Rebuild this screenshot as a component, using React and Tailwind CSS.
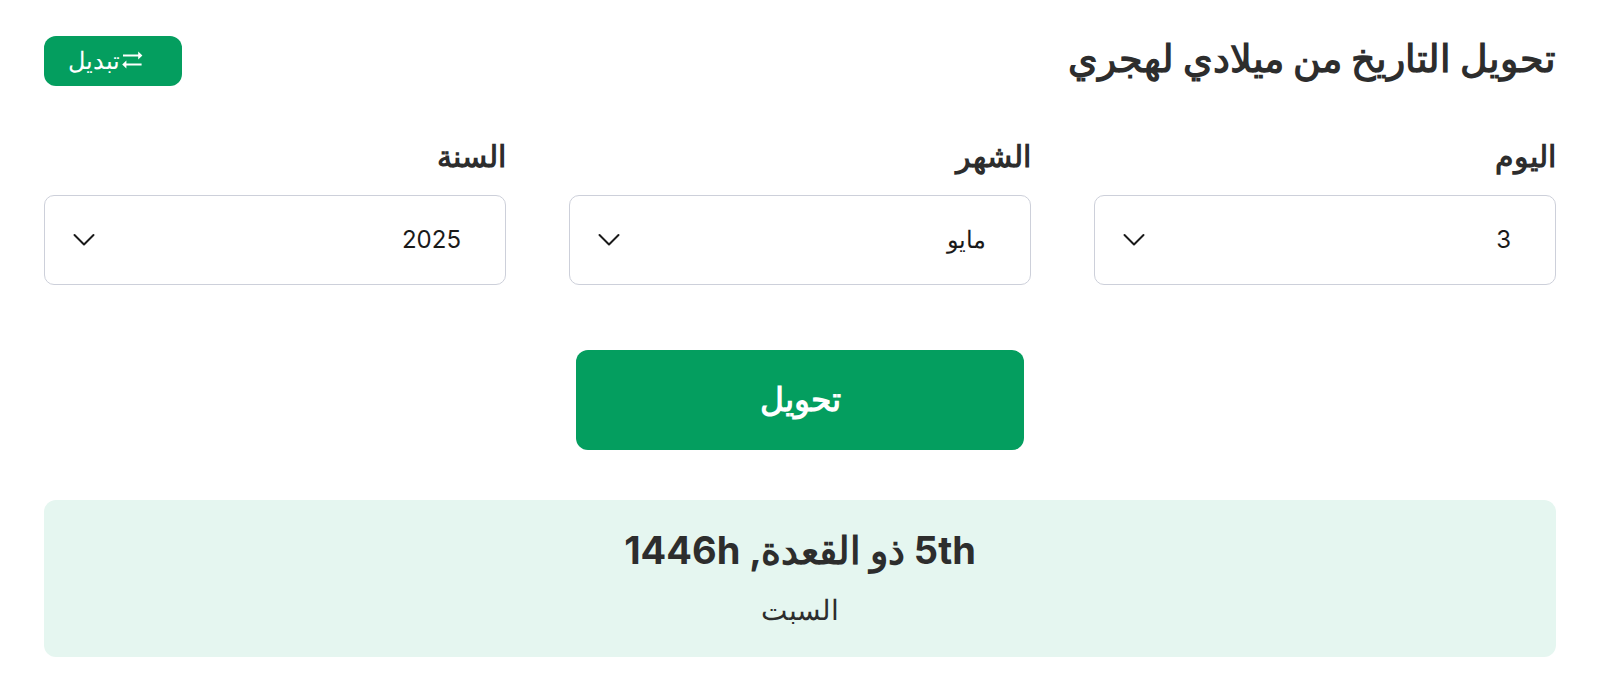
import React from "react";

const FIELDS = [
  { id: "day", label: "اليوم", value: "3" },
  { id: "month", label: "الشهر", value: "مايو" },
  { id: "year", label: "السنة", value: "2025" },
];

function SwapIcon() {
  return (
    <svg width="24" height="24" viewBox="0 0 24 24" fill="currentColor" aria-hidden="true">
      <path d="M3 5.6h15.2V2.6L22.4 6.6l-4.2 4V7.6H3z" />
      <path d="M21.6 14.4H6.4v-3L2.2 15.4l4.2 4v-3h15.2z" />
    </svg>
  );
}

function SelectField({ id, label, value }) {
  return (
    <div>
      <label htmlFor={id} className="block text-[30px] leading-[38px] font-bold">{label}</label>
      <div className="grid items-center mt-5">
        <select id={id} defaultValue={value} className="col-start-1 row-start-1 w-full h-[90px] appearance-none rounded-[10px] border border-[#cdd0da] bg-white ps-11 pe-20 text-2xl text-[#1a1a1a]">
          <option>{value}</option>
        </select>
        <svg className="col-start-1 row-start-1 justify-self-end me-7 pointer-events-none text-[#1a1a1a]" width="24" height="24" viewBox="0 0 24 24" fill="none" stroke="currentColor" strokeWidth="2" strokeLinecap="round" strokeLinejoin="round" aria-hidden="true">
          <path d="M2.5 7l9.5 9.5L21.500 7" />
        </svg>
      </div>
    </div>
  );
}

export default function App() {
  return (
    <main dir="rtl" className="bg-white px-11 py-9 text-[#2d2d2d] font-['Inter','Noto_Sans',sans-serif]">
      <header className="flex items-start justify-between">
        <h1 className="text-[38px] leading-[44px] font-bold">تحويل التاريخ من ميلادي لهجري</h1>
        <button className="flex items-center h-[50px] ps-[38px] pe-6 rounded-xl bg-[#049e5f] text-white text-2xl">
          <SwapIcon />
          <span>تبديل</span>
        </button>
      </header>
      <div className="grid grid-cols-3 gap-[63px] mt-[51px]">
        {FIELDS.map((f) => <SelectField key={f.id} {...f} />)}
      </div>
      <button className="block mx-auto mt-[65px] w-[448px] h-[100px] rounded-xl bg-[#049e5f] text-white text-[33px] font-bold">تحويل</button>
      <section className="mt-[50px] rounded-xl bg-[#e5f6f0] pt-[22px] pb-[23px] text-center">
        <p className="text-[38px] leading-[56px] font-bold">5th ذو القعدة, 1446h</p>
        <p className="mt-2 text-[28px] leading-12">السبت</p>
      </section>
    </main>
  );
}
